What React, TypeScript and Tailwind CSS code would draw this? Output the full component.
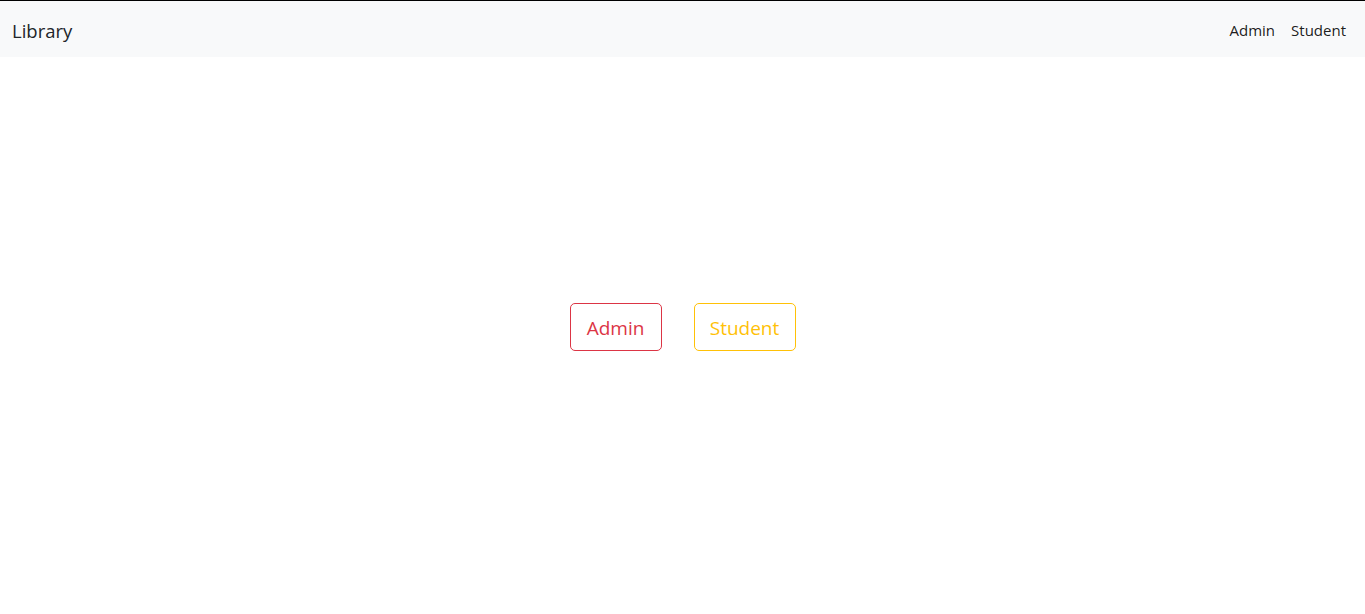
export default function App() {
    return (
        <div
            className="min-h-[614px] bg-white border-t border-black"
            style={{ fontFamily: '"Open Sans", "Noto Sans", sans-serif' }}
        >
            <nav className="h-14 bg-[#f8f9fa] flex items-center justify-between pl-3 pr-[11px]">
                <a href="#" className="text-[18.5px] text-[#212529] leading-none mt-1">
                    Library
                </a>
                <div className="flex items-center mt-0.5">
                    <a href="#" className="px-2 text-[15px] text-black/90">
                        Admin
                    </a>
                    <a href="#" className="px-2 text-[15px] text-black/90">
                        Student
                    </a>
                </div>
            </nav>

            <main className="flex justify-center gap-8 pt-[246px]">
                <button className="w-[92px] h-12 pt-0.5 border border-[#dc3545] rounded-[5px] text-[#dc3545] text-[19px]">
                    Admin
                </button>
                <button className="w-[102px] h-12 pt-0.5 border border-[#ffc107] rounded-[5px] text-[#ffc107] text-[19px]">
                    Student
                </button>
            </main>
        </div>
    );
}
